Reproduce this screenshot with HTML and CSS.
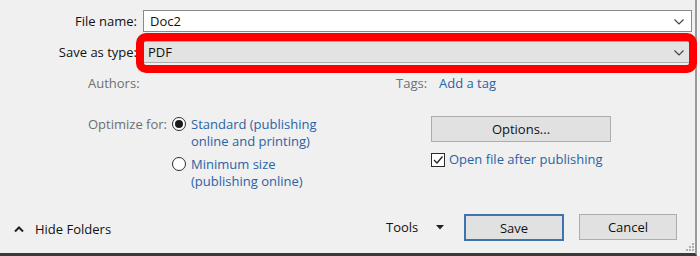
FILE: index.html
```html
<!DOCTYPE html>
<html>
<head>
<meta charset="utf-8">
<link rel="stylesheet" href="styles.css">
</head>
<body>
<div class="dialog">
  <div class="fields">
    <span class="lbl">File name:</span>
    <div class="combo white"><span>Doc2</span><svg class="chev" width="10" height="6" viewBox="0 0 10 6"><polyline points="0.5,0.5 5,5 9.5,0.5" fill="none" stroke="#444" stroke-width="1.2"/></svg></div>
    <span class="lbl">Save as type:</span>
    <div class="combo gray"><span>PDF</span><svg class="chev" width="10" height="6" viewBox="0 0 10 6"><polyline points="0.5,0.5 5,5 9.5,0.5" fill="none" stroke="#444" stroke-width="1.2"/></svg></div>
  </div>

  <div class="meta">
    <span class="muted authors">Authors:</span>
    <span class="muted tags">Tags:</span>
    <span class="link">Add a tag</span>
  </div>

  <div class="options">
    <div class="opt-left">
      <span class="muted opt-label">Optimize for:</span>
      <div class="radios">
        <div class="radio-row"><span class="radio on"></span><span class="link">Standard (publishing<br>online and printing)</span></div>
        <div class="radio-row"><span class="radio"></span><span class="link">Minimum size<br>(publishing online)</span></div>
      </div>
    </div>
    <div class="opt-right">
      <div class="btn options-btn">Options...</div>
      <div class="check-row">
        <span class="check"><svg width="12" height="12" viewBox="0 0 12 12"><polyline points="2,6 5,9 10.5,2.5" fill="none" stroke="#222" stroke-width="1.3"/></svg></span>
        <span class="link">Open file after publishing</span>
      </div>
    </div>
  </div>

  <div class="footer">
    <div class="hide-folders">
      <svg width="10" height="7" viewBox="0 0 10 7"><polyline points="1,5.5 5,1.5 9,5.5" fill="none" stroke="#222" stroke-width="2"/></svg>
      <span>Hide Folders</span>
    </div>
    <span class="tools">Tools</span>
    <svg class="tri" width="8" height="5" viewBox="0 0 8 5"><polygon points="0,0 8,0 4,4.5" fill="#222"/></svg>
    <div class="btn save">Save</div>
    <div class="btn cancel">Cancel</div>
  </div>

  <svg class="grip" width="8" height="8" viewBox="0 0 8 8">
    <rect x="6" y="0" width="2" height="2" fill="#b0b0b0"/>
    <rect x="3" y="3" width="2" height="2" fill="#b0b0b0"/>
    <rect x="6" y="3" width="2" height="2" fill="#b0b0b0"/>
    <rect x="0" y="6" width="2" height="2" fill="#b0b0b0"/>
    <rect x="3" y="6" width="2" height="2" fill="#b0b0b0"/>
    <rect x="6" y="6" width="2" height="2" fill="#b0b0b0"/>
  </svg>
  <div class="highlight"></div>
</div>
</body>
</html>
```

FILE: styles.css
```css
* { box-sizing: border-box; }
html, body {
  margin: 0;
  padding: 0;
  background: #f4f4f4;
}
body {
  font-family: "Open Sans", "Noto Sans", sans-serif;
  font-size: 13px;
  color: #111;
}
.dialog {
  position: relative;
  width: 697px;
  height: 256px;
  background: #f0f0f0;
  border-right: 2px solid #9a9a9a;
  border-bottom: 3px solid #3a3a3a;
  padding-top: 10px;
}
.fields {
  display: grid;
  grid-template-columns: 137px 549px;
  grid-auto-rows: 22px;
  column-gap: 6px;
  row-gap: 9px;
}
.lbl {
  text-align: right;
  line-height: 22px;
  color: #111;
}
.combo {
  display: flex;
  align-items: center;
  justify-content: space-between;
  padding: 0 6px 0 6px;
  line-height: 20px;
  border: 1px solid #8a8a8a;
}
.combo.white { background: #fff; padding-right: 6px; }
.combo.gray { background: #e3e3e3; border-color: #adadad; padding-left: 4px; }
.chev { margin-top: 1px; margin-right: 1px; }

.meta {
  display: flex;
  margin-top: 12px;
  padding-left: 88px;
  line-height: 17px;
}
.muted { color: #6f6f6f; }
.link { color: #2863a6; }
.authors { width: 308px; }
.tags { width: 43px; }

.options {
  display: flex;
  margin-top: 24px;
  padding-left: 88px;
  line-height: 17px;
}
.opt-left {
  display: flex;
  width: 343px;
}
.opt-label { width: 84px; }
.radios {
  display: flex;
  flex-direction: column;
  gap: 6px;
}
.radio-row {
  display: flex;
  align-items: flex-start;
  gap: 5px;
}
.radio {
  width: 14px;
  height: 14px;
  margin-top: 1px;
  border-radius: 50%;
  border: 1px solid #2a2a2a;
  background: #fff;
  display: flex;
  align-items: center;
  justify-content: center;
}
.radio.on::after {
  content: "";
  width: 8px;
  height: 8px;
  border-radius: 50%;
  background: #1a1a1a;
}
.opt-right {
  display: flex;
  flex-direction: column;
}
.btn {
  display: flex;
  align-items: center;
  justify-content: center;
  background: #e1e1e1;
  border: 1px solid #adadad;
  color: #111;
}
.options-btn {
  width: 180px;
  height: 26px;
}
.check-row {
  display: flex;
  align-items: center;
  gap: 4px;
  margin-top: 9px;
}
.check {
  width: 14px;
  height: 14px;
  border: 1px solid #2a2a2a;
  background: #fff;
  display: flex;
  align-items: center;
  justify-content: center;
}

.footer {
  display: flex;
  align-items: center;
  margin-top: 24px;
  height: 27px;
}
.hide-folders {
  display: flex;
  align-items: center;
  gap: 11px;
  width: 386px;
  padding-left: 14px;
  margin-top: 3px;
}
.tools {
  width: 50px;
  margin-top: -1px;
}
.tri { margin-right: 20px; margin-top: -1px; }
.save {
  width: 100px;
  height: 27px;
  border: 2px solid #3c73b0;
  margin-right: 15px;
}
.cancel {
  width: 98px;
  height: 26px;
  align-self: flex-start;
}
.grip {
  position: absolute;
  right: 1px;
  bottom: 2px;
}
.highlight {
  position: absolute;
  left: 136px;
  top: 33px;
  width: 561px;
  height: 40px;
  border: 8px solid #ff0000;
  border-radius: 10px;
}
```
